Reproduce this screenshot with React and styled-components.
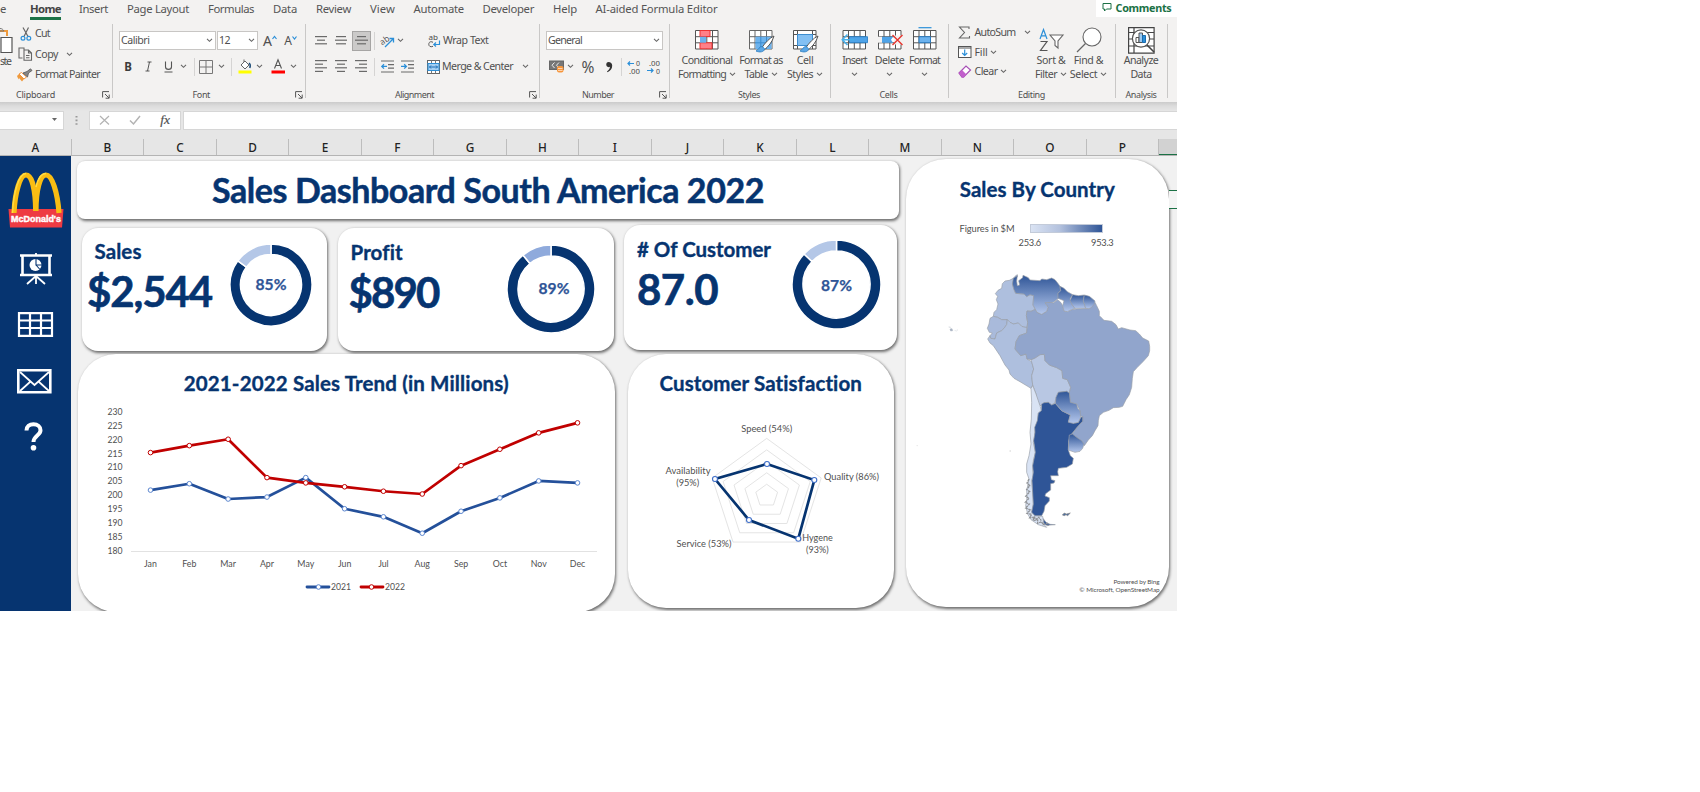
import React, { useLayoutEffect, useRef } from "react";
import styled, { createGlobalStyle } from "styled-components";

const NAVY = "#063470";
const UI = '"Noto Sans", "Open Sans", sans-serif';
const BODY = 'Lato, "Open Sans", sans-serif';

const Global = createGlobalStyle`
  body { margin: 0; background: #fff; }
  * { box-sizing: border-box; }
  svg { display: block; flex: none; overflow: visible; }
`;

/* ---------- text ---------- */
const Text = styled.span`
  display: inline-block;
  white-space: nowrap;
  flex: none;
  font-family: ${(p) => p.$font || UI};
  font-size: ${(p) => p.$size || 10.6}px;
  font-weight: ${(p) => p.$weight || 400};
  color: ${(p) => p.$color || "#505050"};
  line-height: ${(p) => p.$lh || "13.5px"};
  -webkit-text-stroke: ${(p) => p.$stroke || 0}px currentColor;
`;

/* Tracks its text so that it fills exactly `w` pixels. */
function Fit({ w, children, ...rest }) {
  const ref = useRef(null);
  useLayoutEffect(() => {
    const el = ref.current;
    el.style.letterSpacing = "0px";
    const natural = el.getBoundingClientRect().width;
    el.style.letterSpacing = (w - natural) / el.textContent.length + "px";
  }, [w, children]);
  return <Text ref={ref} {...rest}>{children}</Text>;
}

const Heading = (p) => <Fit $font={BODY} $size={20.5} $weight={700} $color={NAVY} $lh="26px" $stroke={0.35} {...p} />;
const Figure = (p) => <Fit $font={BODY} $size={42} $weight={700} $color={NAVY} $lh="50px" $stroke={0.6} {...p} />;

/* ---------- window ---------- */
const Window = styled.div`
  width: 1177px;
  height: 611px;
  overflow: hidden;
  background: #e6e6e6;
  display: flex;
  flex-direction: column;
`;
const Tabs = styled.nav`
  height: 20px;
  flex: none;
  background: #f3f2f1;
  display: flex;
  align-items: flex-start;
`;
const Tab = styled.div`
  margin-left: ${(p) => p.$ml}px;
  height: 20px;
  flex: none;
  line-height: 15px;
  position: relative;
  &::after {
    content: "";
    display: ${(p) => (p.$active ? "block" : "none")};
    position: absolute;
    left: 0;
    right: 0;
    top: 17px;
    height: 2.6px;
    background: #1b7145;
  }
`;
const Comments = styled.div`
  margin-left: auto;
  width: 81px;
  height: 17px;
  background: #fff;
  display: flex;
  align-items: flex-start;
  gap: 4px;
  padding: 2px 0 0 5.5px;
`;
const Ribbon = styled.div`
  height: 81.5px;
  flex: none;
  background: #f3f2f1;
  display: flex;
`;
const Group = styled.section`
  width: ${(p) => p.$w}px;
  flex: none;
  display: flex;
  flex-direction: column;
  position: relative;
  &::after {
    content: "";
    position: absolute;
    right: 0;
    top: 4px;
    width: 1px;
    height: 74px;
    background: #c9c8c7;
  }
`;
const GroupBody = styled.div`
  height: 68px;
  padding-top: ${(p) => p.$top ?? 10}px;
  display: flex;
  flex-direction: ${(p) => (p.$row ? "row" : "column")};
  gap: ${(p) => p.$gap ?? 5}px;
`;
const GroupLabel = styled.div`
  height: 13px;
  display: flex;
  padding-left: ${(p) => p.$pl}px;
  align-items: center;
`;
const Launcher = styled.div`
  position: absolute;
  right: ${(p) => p.$r || 3}px;
  bottom: 2.5px;
`;
const Row = styled.div`
  display: flex;
  align-items: center;
  height: ${(p) => p.$h || 21}px;
  flex: none;
`;
const Item = styled.div`
  margin-left: ${(p) => p.$ml || 0}px;
  width: ${(p) => p.$w}px;
  height: 100%;
  flex: none;
  display: flex;
  align-items: center;
  justify-content: ${(p) => (p.$start ? "flex-start" : "center")};
`;
const Rule = styled.div`
  width: 1px;
  height: ${(p) => p.$h || 18}px;
  margin-left: ${(p) => p.$ml}px;
  background: #d5d4d3;
  flex: none;
`;
const Select = styled.div`
  width: ${(p) => p.$w}px;
  height: 19.5px;
  margin-left: ${(p) => p.$ml}px;
  background: #fff;
  border: 1px solid #c8c6c4;
  display: flex;
  align-items: center;
  justify-content: space-between;
  padding: 0 2px 0 1px;
  flex: none;
`;
const Pressed = styled.div`
  width: 19px;
  height: 20px;
  margin-left: ${(p) => p.$ml}px;
  background: #cbcac9;
  border: 1px solid #a6a5a4;
  display: flex;
  align-items: center;
  justify-content: center;
  flex: none;
`;
const BigButton = styled.div`
  width: ${(p) => p.$w}px;
  margin-left: ${(p) => p.$ml || 0}px;
  display: flex;
  flex-direction: column;
  align-items: center;
  flex: none;
`;
const BigIcon = styled.div`
  height: 28px;
  display: flex;
  align-items: center;
  flex: none;
`;
const Line = styled.div`
  height: 13.5px;
  display: flex;
  align-items: center;
  gap: 3px;
`;

const Chev = ({ c = "#666" }) => (
  <svg width="7" height="5" viewBox="0 0 7 5"><path d="M1 .8l2.500 2.500L6 .8" fill="none" stroke={c} strokeWidth="1.1" /></svg>
);
const LaunchIcon = () => (
  <svg width="8" height="8" viewBox="0 0 8 8"><path d="M.6 6.5V.6H7M3 3l4 4M7.2 3.6v3.6H3.6" fill="none" stroke="#555" strokeWidth="1" /></svg>
);
const Lines = ({ rows, w = 13 }) => (
  <svg width={w} height={rows.length * 3.6} viewBox={`0 0 13 ${rows.length * 3.6}`}>
    {rows.map(([a, b], i) => <path key={i} d={`M${a} ${i * 3.6 + 1.6}H${b}`} stroke="#6a6a6a" strokeWidth="1.2" />)}
  </svg>
);
const Indent = ({ out }) => (
  <svg width="13" height="13" viewBox="0 0 13 13">
    <path d="M0 1h13M7 4.6h6M7 8.2h6M0 12h13" stroke="#6a6a6a" strokeWidth="1.2" />
    <path d={out ? "M6 6.4H1M3 4.2L.8 6.4 3 8.6" : "M0 6.4h5M3.2 4.2l2.2 2.2-2.2 2.2"} fill="none" stroke="#2b8fd8" strokeWidth="1.3" />
  </svg>
);
const Grid = ({ children, w = 26, h = 26 }) => (
  <svg width={w} height={h} viewBox="0 0 26 26">{children}</svg>
);
const gridPath = "M1.5 3.5h22.5v18.5H1.5zM1.5 9.7H24M1.5 15.8H24M7 3.5V22M12.8 3.5V22M18.5 3.5V22";
const Brush = () => (
  <g>
    <path d="M26 9c-4.500 2-9 7-12 11.500l2.500 2.200c3.700-3 8-8 9.500-13.700z" fill="#fff" stroke="#555" strokeWidth="1" />
    <path d="M14 19.500c-3 0-3 3-6 4.500 3 1.500 8.500 1.500 8.500-2.500z" fill="#5ba7e6" stroke="#2b7cc0" strokeWidth=".8" />
  </g>
);
const Glyph = ({ x, y, w, children }) => (
  <text x={x} y={y} textLength={w} lengthAdjust="spacingAndGlyphs" fontSize="7.5" fontFamily="Noto Sans" fill="#4a4a4a">{children}</text>
);

/* ---------- ribbon ---------- */
const PasteBox = styled.div`
  width: 16px;
  display: flex;
  flex-direction: column;
  align-items: flex-start;
`;

function Clipboard() {
  return (
    <Group $w={112.5}>
      <GroupBody $row $top={4} $gap={0}>
        <PasteBox>
          <svg width="16" height="31" viewBox="0 0 16 31">
            <path d="M0 7h7v5" fill="none" stroke="#ef9a3c" strokeWidth="2" />
            <path d="M0 4.500c2 0 3 1 4 2.500H0" fill="none" stroke="#777" />
            <path d="M1 13.500h11v15H1z" fill="#fff" stroke="#555" strokeWidth="1.200" />
          </svg>
          <Fit w={10.5}>ste</Fit>
        </PasteBox>
        <div>
          <Row $h={20.3}>
            <Item $ml={4} $w={15} $start>
              <svg width="12" height="14" viewBox="2 0 12 14"><path d="M5 .5l5 9M10.500 .5L6 9.500" stroke="#666" strokeWidth="1.200" /><circle cx="5" cy="11.200" r="1.900" fill="none" stroke="#2b8fd8" strokeWidth="1.200" /><circle cx="10.800" cy="11.200" r="1.900" fill="none" stroke="#2b8fd8" strokeWidth="1.200" /></svg>
            </Item>
            <Fit w={15}>Cut</Fit>
          </Row>
          <Row $h={20.3}>
            <Item $w={19} $start>
              <svg width="17" height="14" viewBox="0 0 17 14"><path d="M8 2.500V1H3v10h3.500M8 3h4.500l3 3v7.300H8zM12.500 3v3h3M10 8.500h3.500M10 10.700h3.500" fill="none" stroke="#666" strokeWidth="1.100" /></svg>
            </Item>
            <Fit w={23}>Copy</Fit>
            <Item $ml={8} $w={7}><Chev /></Item>
          </Row>
          <Row $h={20.3}>
            <Item $w={19} $start>
              <svg width="17" height="14" viewBox="0 0 17 14"><path d="M3 6l5 5-2 2.500-3-3.500-.500 1.500L1 8z" fill="#ef9a3c" /><path d="M3 6l2.500-1.500 5 4.500L8 11z" fill="#fff" stroke="#ef8a2c" strokeWidth=".9" /><path d="M7 5l4-1.500L14.500.8 16 2.500 12.500 5l-1 4z" fill="#888" stroke="#555" strokeWidth=".8" /></svg>
            </Item>
            <Fit w={65}>Format Painter</Fit>
          </Row>
        </div>
      </GroupBody>
      <GroupLabel $pl={16}><Fit $size={9} w={39}>Clipboard</Fit></GroupLabel>
      <Launcher><LaunchIcon /></Launcher>
    </Group>
  );
}

function FontGroup() {
  return (
    <Group $w={193.5}>
      <GroupBody>
        <Row>
          <Select $ml={6.500} $w={96.500}><Fit w={28.500}>Calibri</Fit><Chev /></Select>
          <Select $ml={1.500} $w={41}><Fit w={11}>12</Fit><Chev /></Select>
          <Item $ml={5} $w={14}><Text $size={14}>A</Text><svg width="5" height="12"><path d="M.5 4L2.500 1.500 4.500 4" fill="none" stroke="#2b8fd8" strokeWidth="1.200" /></svg></Item>
          <Item $ml={7} $w={13}><Text $size={12}>A</Text><svg width="5" height="12"><path d="M.5 1.500L2.500 4 4.500 1.500" fill="none" stroke="#2b8fd8" strokeWidth="1.200" /></svg></Item>
        </Row>
        <Row>
          <Item $ml={9} $w={13}><Text $size={11.500} $weight={700} $color="#3c3c3c">B</Text></Item>
          <Item $ml={7} $w={13}><svg width="9" height="11"><path d="M3.500 1h4M1.500 10h4M5.500 1L3.500 10" stroke="#555" fill="none" /></svg></Item>
          <Item $ml={7} $w={13}><svg width="9" height="12"><path d="M1.500.5v5.200c0 3.500 6 3.500 6 0V.5M.500 11h8" stroke="#555" fill="none" strokeWidth="1.100" /></svg></Item>
          <Item $ml={5} $w={7}><Chev /></Item>
          <Rule $ml={7} />
          <Item $ml={4} $w={15}><svg width="14" height="14"><path d="M.5.5h13v13H.5zM7 .5v13M.5 7h13" fill="none" stroke="#777" /></svg></Item>
          <Item $ml={4} $w={7}><Chev /></Item>
          <Rule $ml={6.500} />
          <Item $ml={5} $w={15}><svg width="14" height="15"><path d="M3 6l4-4 4 4-4 4zM6 3V.5" fill="#fff" stroke="#666" /><path d="M11 4c1.500 1 1.500 3 .8 5" stroke="#1f4e79" strokeWidth="1.500" fill="none" /><rect y="11.500" x=".5" width="13" height="3" fill="#ff0" /></svg></Item>
          <Item $ml={3.500} $w={7}><Chev /></Item>
          <Item $ml={8} $w={15}><svg width="14" height="15"><path d="M3.500 9.500L7 .8l3.500 8.700M4.700 6.500h4.600" fill="none" stroke="#555" strokeWidth="1.100" /><rect y="11.500" x=".5" width="13.500" height="3" fill="#f00" /></svg></Item>
          <Item $ml={4} $w={7}><Chev /></Item>
        </Row>
      </GroupBody>
      <GroupLabel $pl={80}><Fit $size={9} w={17.500}>Font</Fit></GroupLabel>
      <Launcher><LaunchIcon /></Launcher>
    </Group>
  );
}

function AlignGroup() {
  return (
    <Group $w={234}>
      <GroupBody>
        <Row>
          <Item $ml={9} $w={13}><Lines rows={[[0, 12], [2, 10], [0, 12]]} /></Item>
          <Item $ml={7} $w={13}><Lines rows={[[1, 11], [0, 12], [1, 11]]} /></Item>
          <Pressed $ml={4}><Lines rows={[[2, 11], [0, 13], [2, 11]]} /></Pressed>
          <Rule $ml={3} />
          <Item $ml={5} $w={15}><svg width="15" height="14"><path d="M5 13l8-8M9.500 4.500H13.500v4" stroke="#2b8fd8" strokeWidth="1.300" fill="none" /><text x="0" y="9" fontSize="8.500" fontFamily="Noto Sans" fill="#555" transform="rotate(-35 5 7)">ab</text></svg></Item>
          <Item $ml={1.500} $w={7}><Chev /></Item>
          <Item $ml={24} $w={14}><svg width="13" height="15"><Glyph x={0.5} y={6.8} w={9.500}>ab</Glyph><path d="M5 9.300c-3-1.500-4.200.3-4.200 2s1.500 3.200 4.200 2" fill="none" stroke="#555" /><path d="M11.500 7.500v4H6M8 9.500l-2.200 2L8 13.500" fill="none" stroke="#2b8fd8" strokeWidth="1.200" /></svg></Item>
          <Item $ml={1.500} $w={45.500}><Fit w={45.500}>Wrap Text</Fit></Item>
        </Row>
        <Row>
          <Item $ml={9} $w={13}><Lines rows={[[0, 12], [0, 8], [0, 12], [0, 8]]} /></Item>
          <Item $ml={7} $w={13}><Lines rows={[[0, 12], [2, 10], [0, 12], [2, 10]]} /></Item>
          <Item $ml={7} $w={13}><Lines rows={[[0, 12], [4, 12], [0, 12], [4, 12]]} /></Item>
          <Rule $ml={6} />
          <Item $ml={6} $w={13}><Indent out /></Item>
          <Item $ml={7} $w={13}><Indent /></Item>
          <Item $ml={12} $w={14}><svg width="13" height="14"><rect x=".5" y=".5" width="12" height="13" fill="#fff" stroke="#666" /><path d="M4.500.5v3M8.500.5v3M4.500 10.500v3M8.500 10.500v3" stroke="#777" /><rect x="1" y="3.500" width="11" height="7" fill="#a5d0f3" stroke="#2b8fd8" /><path d="M2.500 7h8M4 5.500L2.500 7 4 8.500M9 5.500L10.500 7 9 8.500" stroke="#1a6db5" fill="none" /></svg></Item>
          <Item $ml={2} $w={71}><Fit w={71}>Merge &amp; Center</Fit></Item>
          <Item $ml={9} $w={7}><Chev /></Item>
        </Row>
      </GroupBody>
      <GroupLabel $pl={89}><Fit $size={9} w={39}>Alignment</Fit></GroupLabel>
      <Launcher><LaunchIcon /></Launcher>
    </Group>
  );
}

function NumberGroup() {
  return (
    <Group $w={130}>
      <GroupBody>
        <Row><Select $ml={6} $w={117}><Fit w={34}>General</Fit><Chev /></Select></Row>
        <Row>
          <Item $ml={8} $w={16}><svg width="15" height="13"><rect x=".5" y="1" width="14" height="8.500" fill="#777" stroke="#666" /><path d="M5.500 2.500L3 5.200 5.500 8M10 2.500L7.500 5.200 10 8" stroke="#eee" fill="none" /><rect x="8" y="6" width="6.500" height="6.500" rx="2" fill="#f7963c" /><path d="M9 8.500h4.500M9 10.500h4.500" stroke="#fff" strokeWidth=".6" /></svg></Item>
          <Item $ml={3} $w={7}><Chev /></Item>
          <Item $ml={7} $w={14}><Text $size={15.500} $lh="18px">%</Text></Item>
          <Item $ml={7} $w={13}><svg width="8" height="12"><path d="M3.500 1C1 1 .5 4.500 2.500 5.800c1 .6 2 .4 2.500 0C4.800 8 3.500 9.500 2 10.500l.5.800C5.500 10 7.300 7.500 7.200 4.500 7.100 2.500 5.700 1 3.500 1z" fill="#333" /></svg></Item>
          <Rule $ml={6} />
          <Item $ml={5} $w={14}><svg width="14" height="14"><Glyph x={9} y={6.300} w={4}>0</Glyph><Glyph x={2} y={13.700} w={11}>.00</Glyph><path d="M7 3.500H1M3 1.500l-2 2 2 2" stroke="#2b8fd8" fill="none" strokeWidth="1.200" /></svg></Item>
          <Item $ml={6} $w={14}><svg width="14" height="14"><Glyph x={2} y={6.300} w={11}>.00</Glyph><Glyph x={9} y={13.700} w={4}>0</Glyph><path d="M0 10.500h6M4 8.500l2 2-2 2" stroke="#2b8fd8" fill="none" strokeWidth="1.200" /></svg></Item>
        </Row>
      </GroupBody>
      <GroupLabel $pl={42}><Fit $size={9} w={32}>Number</Fit></GroupLabel>
      <Launcher><LaunchIcon /></Launcher>
    </Group>
  );
}

function Big({ w, ml, icon, a, aw, b, bw, chev = true }) {
  return (
    <BigButton $w={w} $ml={ml}>
      <BigIcon>{icon}</BigIcon>
      <Line><Fit w={aw}>{a}</Fit></Line>
      <Line>{b && <Fit w={bw}>{b}</Fit>}{chev && <Chev />}</Line>
    </BigButton>
  );
}

function StylesGroup() {
  return (
    <Group $w={160.500}>
      <GroupBody $row $top={6} $gap={0}>
        <Big w={62} ml={6} a="Conditional" aw={51} b="Formatting" bw={48} icon={
          <Grid><path d={gridPath} fill="#fff" stroke="#555" /><path d="M6 3.500h10v6H6zM6 15.800h12v6H6z" fill="#ff8088" stroke="#e33" /><path d="M6 9.700h6v6H6z" fill="#6db3ee" /></Grid>} />
        <Big w={46} ml={0} a="Format as" aw={43.500} b="Table" bw={23} icon={
          <Grid><path d={gridPath} fill="#fff" stroke="#666" /><path d="M7.500 9.700h16V22h-16z" fill="#6db3ee" /><path d="M12.800 9.700V22M18.500 9.700V22M7 15.800h17" stroke="#3c8dd0" /><Brush /></Grid>} />
        <Big w={42} ml={0} a="Cell" aw={16.500} b="Styles" bw={26} icon={
          <Grid><path d="M1.500 3.500h22.500v18.500H1.500zM1.500 7.500H24M1.500 18.500H24M5.500 3.500V22M20.500 3.500V22" fill="#fff" stroke="#555" /><path d="M5.500 7.500h15v11h-15z" fill="#83c0f3" stroke="#3c8dd0" /><Brush /></Grid>} />
      </GroupBody>
      <GroupLabel $pl={68}><Fit $size={9} w={22}>Styles</Fit></GroupLabel>
    </Group>
  );
}

function CellsGroup() {
  return (
    <Group $w={118}>
      <GroupBody $row $top={6} $gap={0}>
        <Big w={34} ml={7} a="Insert" aw={24.500} icon={
          <Grid w={27}><path d={gridPath} fill="#fff" stroke="#555" /><path d="M8 9.700h18v6H8z" fill="#4fa3e8" stroke="#1f7ac4" strokeWidth=".8" /><path d="M13 12.700H1M6 7.500L.8 12.700 6 18" stroke="#49b0ea" fill="none" strokeWidth="1.600" /></Grid>} />
        <Big w={36} ml={0} a="Delete" aw={29.500} icon={
          <Grid><path d={gridPath} fill="#fff" stroke="#555" /><path d="M0 9.700h5v6H0z" fill="#f3f2f1" /><path d="M5 9.700h11l-2 3 2 3H5z" fill="#4fa3e8" /><path d="M17 8.500h9v9h-9z" fill="#f3f2f1" /><path d="M15.500 8l10 10M25.500 8l-10 10" stroke="#e8352e" strokeWidth="1.400" /></Grid>} />
        <Big w={34} ml={0} a="Format" aw={31} icon={
          <Grid><path d={gridPath} fill="#fff" stroke="#555" /><path d="M7 9.700h11.500v6H7z" fill="#6db3ee" stroke="#2b7cc0" /><path d="M6.500.7h13" stroke="#2b8fd8" strokeWidth="1.200" /></Grid>} />
      </GroupBody>
      <GroupLabel $pl={49}><Fit $size={9} w={18}>Cells</Fit></GroupLabel>
    </Group>
  );
}

function EditingGroup() {
  return (
    <Group $w={167.500}>
      <GroupBody $row $top={3} $gap={0}>
        <div>
          <Row $h={19.500}>
            <Item $ml={9} $w={17} $start><svg width="13" height="13"><path d="M11 3V1H1.500L6.500 6.500 1.500 12H11.500v-2" fill="none" stroke="#666" strokeWidth="1.100" /></svg></Item>
            <Item $w={41}><Fit w={41}>AutoSum</Fit></Item>
            <Item $ml={8} $w={7}><Chev /></Item>
          </Row>
          <Row $h={19.500}>
            <Item $ml={9} $w={17} $start><svg width="14" height="12"><rect x=".5" y=".5" width="12.500" height="11" fill="#fff" stroke="#555" /><path d="M.5 2h12.500" stroke="#555" /><path d="M6.700 3.500V9.500M4.200 7l2.500 2.500L9.200 7" stroke="#2b8fd8" fill="none" strokeWidth="1.200" /></svg></Item>
            <Item $w={13}><Fit w={13}>Fill</Fit></Item>
            <Item $ml={2} $w={7}><Chev /></Item>
          </Row>
          <Row $h={19.500}>
            <Item $ml={9} $w={17} $start><svg width="14" height="13"><path d="M1 8L8 1l4.500 4-7 7.200H4z" fill="#fff" stroke="#a64db5" strokeWidth="1.200" /><path d="M1 8l3-3 4.500 4.500-3 2.700H4z" fill="#c15fcc" /></svg></Item>
            <Item $w={23}><Fit w={23}>Clear</Fit></Item>
            <Item $ml={2} $w={7}><Chev /></Item>
          </Row>
        </div>
        <BigWrap>
          <Big w={37} ml={2} a="Sort &amp;" aw={29} b="Filter" bw={22} icon={
            <svg width="26" height="26" viewBox="0 0 26 26"><path d="M2 12L5.500 2.500 9 12M3.200 8.800h4.600" fill="none" stroke="#2b8fd8" strokeWidth="1.200" /><path d="M2.500 14.500h6.500L2.500 23.500H9.500" fill="none" stroke="#555" strokeWidth="1.200" /><path d="M12 8h13l-5 6v7l-3-2.500V14z" fill="#fff" stroke="#666" strokeWidth="1.100" /></svg>} />
          <Big w={38} ml={0} a="Find &amp;" aw={29.500} b="Select" bw={27.500} icon={
            <svg width="26" height="26" viewBox="0 0 26 26"><circle cx="16" cy="10" r="9" fill="#fff" stroke="#666" strokeWidth="1.100" /><path d="M9.500 16.500L1 25" stroke="#666" strokeWidth="1.300" /></svg>} />
        </BigWrap>
      </GroupBody>
      <GroupLabel $pl={69.500}><Fit $size={9} w={27}>Editing</Fit></GroupLabel>
    </Group>
  );
}
const BigWrap = styled.div`
  display: flex;
  padding-top: 3px;
`;

function AnalysisGroup() {
  return (
    <Group $w={51.500}>
      <GroupBody $row $top={6} $gap={0}>
        <Big w={50} ml={0} chev={false} a="Analyze" aw={34.500} b="Data" bw={21} icon={
          <svg width="27" height="27" viewBox="0 0 27 27"><path d="M.6.6h25.500v25.500H.6zM.6 5.500h25.500M.6 12h25.500M.6 19h25.500M6 .6v25.500" fill="#fff" stroke="#444" strokeWidth="1.200" /><circle cx="13" cy="11.500" r="8.600" fill="#fff" stroke="#555" strokeWidth="1.200" /><path d="M19 18l7 7" stroke="#444" strokeWidth="1.600" /><path d="M8 10.500h3v5H8z" fill="#fff" stroke="#555" /><path d="M11 6h3.500v9.500H11z" fill="#9cc9f0" stroke="#555" /><path d="M14.500 8.500h3v7h-3z" fill="#2b8fd8" stroke="#1b6db0" /></svg>} />
      </GroupBody>
      <GroupLabel $pl={9.500}><Fit $size={9} w={31}>Analysis</Fit></GroupLabel>
    </Group>
  );
}

/* ---------- formula bar and column heads ---------- */
const FormulaBar = styled.div`
  height: 28px;
  flex: none;
  padding-top: 9px;
  display: flex;
  background: linear-gradient(#cbcbcb, #dcdcdc 4px, #e6e6e6 9px);
`;
const Field = styled.div`
  height: 19px;
  width: ${(p) => (p.$w ? p.$w + "px" : "auto")};
  flex: ${(p) => (p.$w ? "none" : "1")};
  margin-left: ${(p) => p.$ml || 0}px;
  background: #fff;
  border: 1px solid #d6d6d6;
  border-left-width: ${(p) => (p.$flush ? 0 : 1)}px;
  border-right-width: ${(p) => (p.$w ? 1 : 0)}px;
  display: flex;
  align-items: center;
  justify-content: ${(p) => (p.$flush ? "flex-end" : "space-around")};
  padding-right: ${(p) => (p.$flush ? 5 : 0)}px;
`;
const Heads = styled.div`
  height: 26px;
  flex: none;
  display: flex;
  border-bottom: 1px solid #b4b4b4;
  padding-top: 9px;
`;
const Head = styled.div`
  width: ${(p) => p.$w}px;
  flex: none;
  border-right: 1px solid #bdbdbd;
  display: flex;
  justify-content: center;
  font: 500 11.8px/17px ${UI};
  color: #222;
`;
const ActiveHead = styled.div`
  flex: 1;
  background: #d2d2d2;
  border-bottom: 1.5px solid #1b7145;
`;

/* ---------- dashboard ---------- */
const Sheet = styled.main`
  flex: 1;
  display: flex;
  background: #f1f1f1;
`;
const Side = styled.aside`
  width: 71px;
  flex: none;
  background: ${NAVY};
  display: flex;
  flex-direction: column;
  align-items: center;
  padding-top: 16.5px;
`;
const SideItem = styled.div`
  margin-top: ${(p) => p.$mt || 0}px;
  margin-left: ${(p) => p.$ml || 0}px;
`;
const Main = styled.div`
  width: 834.5px;
  flex: none;
  padding: 5px 0 0 6px;
`;
const Card = styled.section`
  width: ${(p) => p.$w}px;
  height: ${(p) => p.$h}px;
  margin-left: ${(p) => p.$ml || 0}px;
  margin-top: ${(p) => p.$mt || 0}px;
  border-radius: ${(p) => p.$r}px;
  background: #fff;
  box-shadow: 1px 1.500px 3px rgba(0, 0, 0, 0.55);
  flex: none;
`;
const TitleCard = styled(Card)`
  display: flex;
  justify-content: center;
  align-items: center;
`;
const Cards = styled.div`
  display: flex;
  align-items: flex-start;
`;
const Kpi = styled(Card)`
  display: flex;
  justify-content: space-between;
  padding: ${(p) => p.$pad};
`;
const KpiText = styled.div`
  display: flex;
  flex-direction: column;
  align-items: flex-start;
`;
const KpiName = styled.div`
  padding-left: ${(p) => p.$pl || 0}px;
  height: 24px;
`;
const KpiValue = styled.div`
  margin-top: 4px;
`;
const ChartCard = styled(Card)`
  display: flex;
  flex-direction: column;
  align-items: center;
  padding-top: ${(p) => p.$pt ?? 15.5}px;
`;

const pt = (cx, cy, r, a) => [cx + r * Math.sin(a), cy - r * Math.cos(a)];
function arc(cx, cy, R, r, a0, a1) {
  const big = a1 - a0 > Math.PI ? 1 : 0;
  const [x0, y0] = pt(cx, cy, R, a0), [x1, y1] = pt(cx, cy, R, a1);
  const [x2, y2] = pt(cx, cy, r, a1), [x3, y3] = pt(cx, cy, r, a0);
  return `M${x0} ${y0}A${R} ${R} 0 ${big} 1 ${x1} ${y1}L${x2} ${y2}A${r} ${r} 0 ${big} 0 ${x3} ${y3}Z`;
}
function Donut({ value, R, r, light = "#b4c7e7", dx = 0, dy = 0 }) {
  const c = R + 1;
  const a = (value / 100) * Math.PI * 2;
  return (
    <svg width={c * 2} height={c * 2}>
      <path d={arc(c, c, R, r, 0, a)} fill={NAVY} stroke="#fff" strokeWidth="1.500" />
      <path d={arc(c, c, R, r, a, Math.PI * 2)} fill={light} stroke="#fff" strokeWidth="1.500" />
      <text x={c + dx} y={c + 5.2 + dy} textAnchor="middle" textLength="31" lengthAdjust="spacingAndGlyphs" fontFamily="Lato" fontWeight="700" fontSize="16" fill="#2f5597" stroke="#2f5597" strokeWidth=".25">{value}%</text>
    </svg>
  );
}

const Label = ({ x, y, w, size = 8.8, anchor = "middle", children }) => (
  <text x={x} y={y - 0.5} textAnchor={anchor} textLength={w} lengthAdjust="spacingAndGlyphs" fontFamily="Lato" fontSize={size} fill="#505050">{children}</text>
);

const months = ["Jan", "Feb", "Mar", "Apr", "May", "Jun", "Jul", "Aug", "Sep", "Oct", "Nov", "Dec"];
const s2021 = [201.9, 204.2, 198.7, 199.4, 206.400, 195.2, 192.3, 186.400, 194.3, 199.1, 205.2, 204.500];
const s2022 = [215.400, 217.9, 220.2, 206.400, 204.500, 203.1, 201.500, 200.500, 210.7, 216.600, 222.500, 226.1];

function Trend() {
  const X = (i) => 72.5 + i * 38.82;
  const Y = (v) => 151 - (v - 180) * 2.78;
  const line = (s) => s.map((v, i) => `${X(i)},${Y(v)}`).join(" ");
  const series = [[s2021, "#24509a", "#5b86cf"], [s2022, "#c00000", "#c00000"]];
  return (
    <svg width="536" height="212" viewBox="0 0 536 212">
      {[230, 225, 220, 215, 210, 205, 200, 195, 190, 185, 180].map((v) => (
        <Label key={v} x={44.500} y={Y(v) + 3.300} w={15} anchor="end">{v}</Label>
      ))}
      <path d="M53 151.500H519" stroke="#e2e2e2" strokeWidth="1.200" />
      {months.map((m, i) => <Label key={m} x={X(i)} y={167.300}>{m}</Label>)}
      {series.map(([s, c, d]) => (
        <g key={c}>
          <polyline points={line(s)} fill="none" stroke={c} strokeWidth="2.700" strokeLinejoin="round" />
          {s.map((v, i) => <circle key={i} cx={X(i)} cy={Y(v)} r="2.300" fill="#fff" stroke={d} strokeWidth="1" />)}
        </g>
      ))}
      <path d="M229 187H251" stroke="#24509a" strokeWidth="2.800" strokeLinecap="round" />
      <circle cx="240.500" cy="187" r="2.300" fill="#fff" stroke="#5b86cf" />
      <Label x={253} y={190.500} w={20} anchor="start">2021</Label>
      <path d="M283 187H305" stroke="#c00000" strokeWidth="2.800" strokeLinecap="round" />
      <circle cx="293.500" cy="187" r="2.300" fill="#fff" stroke="#c00000" />
      <Label x={307} y={190.500} w={20} anchor="start">2022</Label>
    </svg>
  );
}

function Radar() {
  const cx = 138.7, cy = 95.700;
  const poly = (r) => [0, 1, 2, 3, 4].map((k) => pt(cx, cy, r, (k * 2 * Math.PI) / 5).join(",")).join(" ");
  const data = [[139, 64], [186.300, 80], [170.300, 138.700], [121, 120], [87, 79]];
  return (
    <svg width="265" height="190" viewBox="0 0 265 190">
      {[1, 2, 3, 4, 5].map((k) => <polygon key={k} points={poly(k * 11.460)} fill="none" stroke="#e4e4e4" />)}
      <polygon points={data.map((p) => p.join(",")).join(" ")} fill="none" stroke={NAVY} strokeWidth="2.700" />
      {data.map(([x, y], i) => <circle key={i} cx={x} cy={y} r="2.500" fill="#fff" stroke="#3f6fc9" strokeWidth="1.100" />)}
      <Label x={138.700} y={32.300} w={51}>Speed (54%)</Label>
      <Label x={223.500} y={80.300} w={55}>Quality (86%)</Label>
      <Label x={189.500} y={141} w={30.500}>Hygene</Label>
      <Label x={189.300} y={153.500} w={22.500}>(93%)</Label>
      <Label x={76} y={147.500} w={55}>Service (53%)</Label>
      <Label x={60} y={74} w={45}>Availability</Label>
      <Label x={59.700} y={86.500} w={23}>(95%)</Label>
    </svg>
  );
}

const FADE = "url(#fade)";
const countries = [
  ["#aebfde", "M262 47L255 52 250 58 238 64 225 66 217 74 215 88 204 94 196 104 203 112 199 122 204 135 200 152 192 160 190 172 203 175 215 182 232 182 240 190 250 195 265 192 275 202 285 205 291 205 293 190 289 170 291 156 303 157 316 151 309 138 311 110 300 107 290 113 282 105 257 103 252 92 247 75 252 62 262 53Z"],
  ["#a9badb", "M190 172L203 175 215 182 232 182 230 197 222 208 215 215 200 222 195 240 182 238 180 230 187 222 178 220 172 208 177 195 180 178Z"],
  ["#aebfde", "M180 230L173 240 180 252 190 260 210 290 225 318 237 333 240 345 252 358 270 368 303 388 308 378 305 350 311 330 305 308 291 300 288 285 272 290 255 270 258 248 268 230 290 222 291 205 285 205 275 202 265 192 250 195 240 190 232 182 230 197 222 208 215 215 200 222 195 240 182 238Z"],
  ["#b8c7e3", "M303 302L315 297 330 287 343 286 345 305 358 318 380 326 396 335 398 358 412 362 422 385 418 402 410 397 385 400 378 415 375 430 365 438 355 430 342 431 338 438 330 440 322 425 318 405 308 378 305 350 311 330Z"],
  ["#91a5cc", "M291 156L303 157 316 151 321 160 335 166 350 157 354 145 345 131 360 129 370 132 383 122 392 130 398 140 402 156 412 158 425 152 440 150 462 149 477 149 485 142 490 132 495 130 500 140 508 157 508 170 515 177 522 184 545 187 558 197 565 210 575 206 600 213 617 215 628 225 638 237 656 246 659 262 659 275 655 290 640 307 622 325 610 338 607 358 605 385 598 407 588 422 578 442 568 445 550 446 537 454 520 460 508 470 505 485 504 500 495 515 487 530 475 543 463 560 455 548 440 535 425 527 445 500 458 487 458 473 450 470 450 455 440 435 421 430 418 402 422 385 412 362 398 358 396 335 380 326 358 318 345 305 343 286 330 287 315 297 303 302 291 300 288 285 272 290 255 270 258 248 268 230 290 222 293 190 289 170Z"],
  ["#d9e3f4", "M303 388L308 380 318 405 330 440 334 455 325 462 323 485 316 505 314 530 310 550 316 580 310 605 308 630 310 650 305 665 308 700 310 735 305 760 315 770 338 772 342 797 350 805 325 797 303 782 293 765 287 740 291 715 290 695 297 660 290 640 290 615 297 590 303 555 300 520 304 480 305 430Z"],
  ["#2f5597", "M342 431L355 430 365 438 376 433 395 455 421 468 415 488 430 493 445 490 452 475 458 473 458 487 445 500 425 525 416 545 415 573 421 590 430 598 427 615 410 625 385 628 383 638 385 650 362 650 364 662 375 665 372 672 362 674 362 693 347 704 345 711 358 716 358 726 345 740 342 757 335 770 315 770 305 760 310 735 308 700 306 665 310 640 308 620 316 580 311 545 315 520 314 505 322 485 325 462 334 455 335 435Z"],
  ["#2f5597", "M340 779L348 790 360 796 376 797 350 799 342 795Z"],
  [FADE, "M250 58L262 50 260 66 262 80 269 78 266 65 278 56 279 49 295 56 300 63 330 65 335 60 350 62 365 57 375 62 383 72 390 82 392 95 384 103 385 118 370 130 345 131 354 145 350 157 335 166 321 160 309 138 311 110 300 107 290 113 282 105 257 103 252 92 247 75Z"],
  [FADE, "M390 82L402 88 412 98 428 107 420 120 427 138 435 148 425 152 412 158 402 156 398 140 402 125 384 118 384 103 392 95Z"],
  [FADE, "M428 107L445 110 463 108 460 125 467 148 452 148 435 148 427 138 420 125Z"],
  [FADE, "M463 108L478 112 495 126 493 135 485 145 477 149 467 148 460 125Z"],
  [FADE, "M385 400L410 397 418 402 421 430 440 435 443 448 450 455 452 475 445 490 430 493 415 490 421 468 395 455 376 433 378 415Z"],
  [FADE, "M418 528L427 525 440 535 455 545 462 555 458 568 450 577 435 580 415 573 416 545Z"],
];
function SouthAmerica() {
  return (
    <svg width="216" height="262" viewBox="36 36 648 786">
      <defs><linearGradient id="fade" x1="0" y1="0" x2="0" y2="1"><stop offset="0" stopColor="#2f5597" /><stop offset="1" stopColor="#b4c7ec" /></linearGradient></defs>
      {countries.map(([f, d], i) => <path key={i} d={d} fill={f} stroke="#999fa8" strokeWidth="2" strokeLinejoin="round" />)}
      <path d="M297 660l-6 12 8 8-9 12 9 6-12 14 10 6-11 12 12 5-11 12 14 6-10 10 14 3-6 10 14-1-4 9 14-1 0 10 12-5 4 9 12-4 4 8M312 773l6 8 8-6 8 10" fill="none" stroke="#8f9296" strokeWidth="4" strokeDasharray="7 2" />
      <path d="M56 204l6 1M60 210l6-1 2 6-6 1zM75 214l3 3M80 214l3-1" fill="#a9b5c8" stroke="#a9b1bd" strokeWidth="1.500" />
      <path d="M397 768l6-6 6 3 12-3-8 8-5-3-5 3z" fill="#4e6f9f" stroke="#888" strokeWidth="2" />
      <path d="M239 576h3" stroke="#bbb" strokeWidth="3" />
      <path d="M-40 560h3" stroke="#ddd" strokeWidth="3" />
    </svg>
  );
}

const Legend = styled.div`
  display: flex;
  align-items: flex-start;
  margin-top: 20px;
  align-self: flex-start;
  padding-left: 54px;
`;
const Scale = styled.div`
  margin-left: 4px;
  width: 95px;
  display: flex;
  flex-direction: column;
  align-items: center;
`;
const Ramp = styled.div`
  width: 73px;
  height: 8.5px;
  margin-top: 2px;
  border: 1px solid #c3cbd9;
  background: linear-gradient(90deg, #dae3f3, #b4c2de 40%, #2f5597);
`;
const Ends = styled.div`
  width: 95px;
  display: flex;
  justify-content: space-between;
  margin-top: 4.5px;
`;
const MapBox = styled.div`
  margin-top: 22px;
  align-self: flex-start;
  padding-left: 36.5px;
`;
const Credit = styled.div`
  margin-top: 44.5px;
  align-self: flex-end;
  padding-right: 9.5px;
  display: flex;
  flex-direction: column;
  align-items: flex-end;
`;
const Edge = styled.div`
  width: 7.5px;
  height: 18.5px;
  margin-top: 34.500px;
  border: solid #1b7145;
  border-width: 1.3px 0;
  background: #f4f4f4;
`;

const tabList = [
  ["e", 0, 5], ["Home", 25, 31, 1], ["Insert", 18, 29], ["Page Layout", 19, 62], ["Formulas", 19, 46], ["Data", 19, 24],
  ["Review", 19, 35], ["View", 19, 25], ["Automate", 18.500, 50.500], ["Developer", 18.500, 51.500], ["Help", 19, 24], ["AI-aided Formula Editor", 18.500, 122],
];

export default function App() {
  return (
    <>
      <Global />
      <Window>
        <Tabs>
          {tabList.map(([t, ml, w, on]) => (
            <Tab key={t} $ml={ml} $active={on}><Fit w={w} $size={11.300} $lh="15px" $weight={on ? 700 : 400} $color={on ? "#444" : "#555"}>{t}</Fit></Tab>
          ))}
          <Comments>
            <svg width="10" height="10"><path d="M1 1.500h8v5.500H4.500L2.500 9V7H1z" fill="none" stroke="#1b7145" /></svg>
            <Fit w={56} $size={10.800} $weight={700} $color="#1b7145" $lh="12.500px">Comments</Fit>
          </Comments>
        </Tabs>
        <Ribbon>
          <Clipboard /><FontGroup /><AlignGroup /><NumberGroup /><StylesGroup /><CellsGroup /><EditingGroup /><AnalysisGroup />
        </Ribbon>
        <FormulaBar>
          <Field $w={63.500} $flush><svg width="6" height="4"><path d="M0 0h5L2.500 3z" fill="#666" /></svg></Field>
          <Item $w={25.500}><svg width="3" height="11"><path d="M1.500 1v10" stroke="#999" strokeWidth="2" strokeDasharray="1.600 2" /></svg></Item>
          <Field $w={91.500}>
            <svg width="11" height="10"><path d="M1 1l9 8.500M10 1L1 9.500" stroke="#b3b3b3" strokeWidth="1.200" /></svg>
            <svg width="12" height="10"><path d="M1 5.500L4.500 9 11 1" stroke="#b3b3b3" strokeWidth="1.500" fill="none" /></svg>
            <Text $font='"Liberation Serif", serif' $size={13.500} $stroke={0.2} as="i">fx</Text>
          </Field>
          <Field $ml={2.500} />
        </FormulaBar>
        <Heads>
          {"ABCDEFGHIJKLMNOP".split("").map((c, i) => <Head key={c} $w={i ? 72.500 : 71.700}>{c}</Head>)}
          <ActiveHead />
        </Heads>
        <Sheet>
          <Side>
            <svg width="56" height="56" viewBox="0 0 56 56">
              <path d="M.5 37h55l-1.500 18.500H2z" fill="#ee3b43" />
              <path d="M6 41C7 20 12 3 18 3s9.500 15 9.700 36M28 39C28 18 32 3 38 3s11.500 17 13 38" fill="none" stroke="#f9bd13" strokeWidth="5.200" />
              <path d="M4.500 41C5.500 20 11 1.500 18 1.500M28 15C30 6 33 1.500 38 1.500" fill="none" stroke="#ffdb43" strokeWidth="1.500" />
              <text x="28" y="50.300" textAnchor="middle" textLength="50" lengthAdjust="spacingAndGlyphs" fontFamily="Liberation Sans" fontWeight="700" fontSize="8.500" fill="#fff" stroke="#fff" strokeWidth=".4">McDonald's</text>
            </svg>
            <SideItem $mt={25}>
              <svg width="34" height="32" viewBox="0 0 34 32"><path d="M1 2.500h32M1 22h32M3.500 2.500V22M30.500 2.500V22" stroke="#fff" strokeWidth="2.600" fill="none" /><path d="M17 22v9M17 23l-9 8M17 23l9 8M17 0v2" stroke="#fff" strokeWidth="1.800" /><circle cx="16.500" cy="12" r="6" fill="#fff" /><path d="M17 5.500V12h6.500M17 12l4 4.500" stroke={NAVY} strokeWidth="1.100" fill="none" /></svg>
            </SideItem>
            <SideItem $mt={27}>
              <svg width="35" height="25" viewBox="0 0 35 25"><path d="M1 1.200h33v22.600H1zM1 8.500h33M1 16h33M12 1v23M23 1v23" fill="none" stroke="#fff" strokeWidth="2.200" /></svg>
            </SideItem>
            <SideItem $mt={32} $ml={-3}>
              <svg width="35" height="25" viewBox="0 0 35 25"><path d="M1.300 1.300h32v22h-32z" fill="none" stroke="#fff" strokeWidth="2.600" /><path d="M3 3l14.500 13L32 3M3 22l10.500-9.500M32 22L21.500 12.500" fill="none" stroke="#fff" strokeWidth="1.700" /></svg>
            </SideItem>
            <SideItem $mt={28} $ml={-4}>
              <svg width="19" height="30" viewBox="0 0 19 30"><path d="M2.500 8.500C2.500 4.500 5.500 2.200 9.500 2.200c4.200 0 7 2.600 7 6 0 5.300-7 5.300-7 11.800" fill="none" stroke="#fff" strokeWidth="4" /><circle cx="9.500" cy="25.800" r="2.800" fill="#fff" /></svg>
            </SideItem>
          </Side>
          <Main>
            <TitleCard $w={822} $h={58} $r={8}><Fit w={552} $font={BODY} $size={34} $weight={700} $color={NAVY} $lh="38px" $stroke={0.5}>Sales Dashboard South America 2022</Fit></TitleCard>
            <Cards>
              <Kpi $w={245} $h={123} $ml={5} $mt={9} $r={16} $pad="10px 14px 0 5px">
                <KpiText><KpiName $pl={7.500}><Heading w={47}>Sales</Heading></KpiName><KpiValue><Figure w={125}>$2,544</Figure></KpiValue></KpiText>
                <SideItem $mt={5}><Donut value={85} R={41} r={30.500} /></SideItem>
              </Kpi>
              <Kpi $w={276} $h={123} $ml={11} $mt={9.500} $r={16} $pad="11px 18px 0 10.500px">
                <KpiText><KpiName $pl={2}><Heading w={52}>Profit</Heading></KpiName><KpiValue><Figure w={90}>$890</Figure></KpiValue></KpiText>
                <SideItem $mt={4.500}><Donut value={89} R={44} r={33} light="#8faadc" dx={3} dy={-0.500} /></SideItem>
              </Kpi>
              <Kpi $w={273} $h={125} $ml={10} $mt={6.500} $r={16} $pad="11px 15px 0 13px">
                <KpiText><KpiName><Heading w={134}># Of Customer</Heading></KpiName><KpiValue><Figure w={81}>87.0</Figure></KpiValue></KpiText>
                <SideItem $mt={2.500}><Donut value={87} R={44.500} r={33.500} dy={1} /></SideItem>
              </Kpi>
            </Cards>
            <Cards>
              <ChartCard $w={536.500} $h={258} $ml={1} $mt={3} $r={38}>
                <Heading w={325}>2021-2022 Sales Trend (in Millions)</Heading>
                <SideItem $mt={4.500}><Trend /></SideItem>
              </ChartCard>
              <ChartCard $w={265.500} $h={254} $ml={13.500} $mt={3} $r={38}>
                <Heading w={203}>Customer Satisfaction</Heading>
                <SideItem $mt={4.500}><Radar /></SideItem>
              </ChartCard>
            </Cards>
          </Main>
          <ChartCard $w={263.500} $h={447.500} $mt={3.500} $r={40} $pt={17}>
            <Heading w={155}>Sales By Country</Heading>
            <Legend>
              <Fit w={55} $font={BODY} $size={9.300} $lh="13px">Figures in $M</Fit>
              <Scale>
                <Ramp />
                <Ends><Fit w={22.500} $font={BODY} $size={9.300} $lh="12px">253.6</Fit><Fit w={22.500} $font={BODY} $size={9.300} $lh="12px">953.3</Fit></Ends>
              </Scale>
            </Legend>
            <MapBox><SouthAmerica /></MapBox>
            <Credit>
              <Fit w={46} $font={BODY} $size={6.400} $lh="8.700px">Powered by Bing</Fit>
              <Fit w={80} $font={BODY} $size={6.400} $lh="8.700px">© Microsoft, OpenStreetMap</Fit>
            </Credit>
          </ChartCard>
          <Edge />
        </Sheet>
      </Window>
    </>
  );
}
